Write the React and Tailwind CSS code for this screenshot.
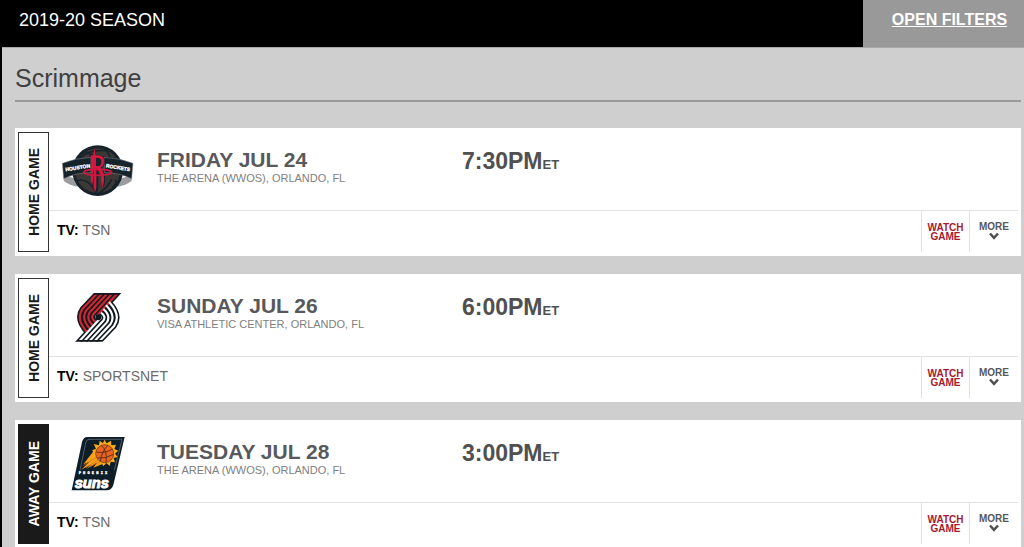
import React from "react";

function RocketsLogo() {
  return (
    <svg viewBox="0 0 255 195" className="h-[65px] w-[85px]" role="img" aria-label="Houston Rockets">
      <path d="M26 112 L62 122 L76 146 Q44 144 26 128 Z" fill="#9a9c9e" />
      <path d="M230 112 L194 122 L180 146 Q212 144 230 128 Z" fill="#9a9c9e" />
      <circle cx="128" cy="98" r="76" fill="#17232b" />
      <circle cx="128" cy="98" r="67" fill="#3b3835" />
      <g fill="none" stroke="#17232b" strokeWidth="5">
        <path d="M74 60 Q104 32 160 38" />
        <path d="M92 42 Q122 60 190 62" />
        <path d="M148 30 Q164 46 170 74" />
        <path d="M66 128 Q84 122 100 134 T122 166" />
        <path d="M170 124 Q158 150 128 168" />
        <path d="M182 124 Q186 140 172 148" />
      </g>
      <path d="M22 76 Q62 60 108 58 L108 104 Q62 104 26 122 Z" fill="#17232b" stroke="#8d9194" strokeWidth="1.5" />
      <path d="M234 76 Q194 60 148 58 L148 104 Q194 104 230 122 Z" fill="#17232b" stroke="#8d9194" strokeWidth="1.5" />
      <path d="M104 50 H112 L118 26 L124 50 H132 Q150 52 150 70 Q150 84 140 90 L150 108 V132 L145 150 L140 132 V110 L130 92 V152 L124 168 L118 152 V134 L113 150 L108 132 V58 H104 Z" fill="#17232b" />
      <path d="M107 52 H114 L118 30 L122 52 H132 Q148 54 148 70 Q148 84 137 88 L147 108 V130 L143 150 L138 128 V110 L127 92 H124 V148 L120 164 L116 148 V92 H114 V130 L111 142 L108 130 V60 H107 Z M123 60 V84 H131 Q139 82 139 72 Q139 62 131 60 Z" fill="#d3173f" fillRule="evenodd" />
      <ellipse cx="128" cy="103" rx="42" ry="9" fill="none" stroke="#d3173f" strokeWidth="5" />
      <text x="32" y="100" transform="rotate(-9 32 100)" fontFamily="Liberation Sans Narrow, Liberation Sans, sans-serif" fontWeight="700" fontSize="15" fill="#fff" stroke="#fff">HOUSTON</text>
      <text x="152" y="88" transform="rotate(9 152 88)" fontFamily="Liberation Sans Narrow, Liberation Sans, sans-serif" fontWeight="700" fontSize="15" fill="#fff" stroke="#fff">ROCKETS</text>
    </svg>
  );
}

const blazerStripes = [
  "M112 8 L53 70 Q30 102 68 142",
  "M127 8 L64 75 Q46 101 77 132",
  "M142 8 L75 80 Q61 100 85 121",
  "M157 8 L86 85 Q75 98 92 110",
  "M172 8 L97 90",
];

function BlazersLogo() {
  return (
    <svg viewBox="-30 -4 255 195" className="h-[65px] w-[85px]" role="img" aria-label="Portland Trail Blazers">
      <defs>
        <clipPath id="blazer-outline"><rect x="30" y="23" width="140" height="146" /></clipPath>
        <clipPath id="blazer-stripes"><rect x="30" y="28" width="140" height="136" /></clipPath>
      </defs>
      <g clipPath="url(#blazer-outline)" fill="none" stroke="#101820" strokeWidth="16">
        {blazerStripes.map((d) => <path key={d} d={d} />)}
        <g transform="rotate(180 100 96)">
          {blazerStripes.map((d) => <path key={d} d={d} />)}
        </g>
      </g>
      <g clipPath="url(#blazer-stripes)" fill="none" strokeWidth="6.5">
        <g stroke="#d22730">
          {blazerStripes.map((d) => <path key={d} d={d} />)}
        </g>
        <g stroke="#fff" transform="rotate(180 100 96)">
          {blazerStripes.map((d) => <path key={d} d={d} />)}
        </g>
      </g>
      <circle cx="100" cy="96" r="9" fill="#101820" />
    </svg>
  );
}

function SunsLogo() {
  return (
    <svg viewBox="-15 3 255 195" className="h-[65px] w-[85px]" role="img" aria-label="Phoenix Suns">
      <path d="M82 24 H194 L160 168 Q155 184 140 184 H35 L66 40 Q70 24 82 24 Z" fill="#0d1e29" />
      <path d="M86 31 H186 L163 124 M60 124 L77 42 Q79 31 88 31" fill="none" stroke="#737c82" strokeWidth="2" />
      <path d="M104 62 L70 106 L88 98 L64 122 L94 106 L80 120 L112 100 L100 116 L130 104 Z" fill="#f6a01a" />
      <path d="M133 32 L140 43 L153 35 L154 49 L168 47 L163 60 L175 65 L165 74 L173 84 L161 87 L165 100 L152 98 L149 111 L139 102 L130 112 L124 100 L109 103 L110 88 L97 84 L105 74 L96 64 L108 59 L101 45 L117 49 L119 35 L129 43 Z" fill="#fbab18" />
      <circle cx="134" cy="74" r="27" fill="#ea6420" stroke="#5b2a18" strokeWidth="2" />
      <path d="M109 69 Q138 74 157 60 M112 87 Q138 90 160 76 M124 50 Q143 65 138 99 M143 49 Q125 68 121 97" fill="none" stroke="#4a251b" strokeWidth="2.5" />
      <path d="M70 110 L110 84 M78 116 L116 92 M92 112 L122 98" stroke="#d96a1c" strokeWidth="2" />
      <text x="56" y="136" fontFamily="DejaVu Sans Mono, monospace" fontWeight="700" fontSize="11" fill="#fff" stroke="#fff" xmlSpace="preserve">P H O E N I X</text>
      <text x="44" y="176" fontFamily="Liberation Sans Narrow, Liberation Sans, sans-serif" fontWeight="700" fontStyle="italic" fontSize="44" fill="#fff" stroke="#fff" strokeWidth="3">suns</text>
    </svg>
  );
}

const games = [
  { site: "HOME GAME", Logo: RocketsLogo, date: "FRIDAY JUL 24", venue: "THE ARENA (WWOS), ORLANDO, FL", time: "7:30PM", tv: "TSN" },
  { site: "HOME GAME", Logo: BlazersLogo, date: "SUNDAY JUL 26", venue: "VISA ATHLETIC CENTER, ORLANDO, FL", time: "6:00PM", tv: "SPORTSNET" },
  { site: "AWAY GAME", away: true, Logo: SunsLogo, date: "TUESDAY JUL 28", venue: "THE ARENA (WWOS), ORLANDO, FL", time: "3:00PM", tv: "TSN" },
];

function GameCard({ site, away, Logo, date, venue, time, tv }) {
  return (
    <li className="flex bg-white py-1 px-[3px]">
      <div
        className={
          away
            ? "flex w-[31px] shrink-0 items-center justify-center border border-[#1a1a1a] bg-[#1a1a1a] text-white"
            : "flex w-[31px] shrink-0 items-center justify-center border border-[#333] bg-white text-[#1a1a1a]"
        }
      >
        <span className="rotate-180 whitespace-nowrap text-sm font-bold [writing-mode:vertical-rl]">{site}</span>
      </div>
      <div className="min-w-0 grow">
        <div className="flex h-[78px] pt-[6px] pl-[6px]">
          <Logo />
          <div className="ml-[17px] w-[305px] pt-[11px]">
            <h3 className="text-[21px] leading-[22px] font-bold text-[#58595b]">{date}</h3>
            <p className="text-[11px] leading-[14px] text-[#808080]">{venue}</p>
          </div>
          <p className="pt-[11px] text-[23px] leading-6 font-bold text-[#505050]">
            {time}<span className="text-[13px]">ET</span>
          </p>
        </div>
        <div className="flex h-[42px] border-t border-[#e2e2e2]">
          <p className="grow pt-[9px] pl-2 text-sm text-[#6b6b6b]">
            <strong className="text-black">TV:</strong> {tv}
          </p>
          <a href="#watch" className="w-12 border-l border-[#e2e2e2] pt-3 text-center text-[10px] leading-[9px] font-bold text-[#a6192e]">
            WATCH<br />GAME
          </a>
          <button type="button" className="flex w-[49px] flex-col items-center border-l border-[#e2e2e2] pt-[10px] text-[10px] leading-[11px] font-bold text-[#58595b]">
            MORE
            <svg viewBox="0 0 10 8" className="h-2 w-[10px]" fill="none" stroke="#505050" strokeWidth="2.5" aria-hidden="true">
              <path d="M1 1.5 L5 5.8 L9 1.5" />
            </svg>
          </button>
        </div>
      </div>
    </li>
  );
}

export default function App() {
  return (
    <div className="min-h-screen border-l-2 border-black bg-[#cfcfcf] font-['Liberation_Sans',Arial,sans-serif]">
      <header className="flex h-12 border-b border-[#aaa] bg-black">
        <h1 className="grow pt-[9px] pl-[17px] text-[18px] leading-[22px] text-white">2019-20 SEASON</h1>
        <button type="button" className="flex w-[161px] shrink-0 justify-center bg-[#999] pt-[10px] pl-3 text-base leading-5 font-bold text-white underline">
          OPEN FILTERS
        </button>
      </header>
      <main className="pt-4 pr-[3px] pl-[13px]">
        <h2 className="border-b-2 border-[#999] pb-2 text-[25px] leading-7 text-[#404040]">Scrimmage</h2>
        <ul className="mt-[26px] flex flex-col gap-[18px]">
          {games.map((g) => <GameCard key={g.date} {...g} />)}
        </ul>
      </main>
    </div>
  );
}
